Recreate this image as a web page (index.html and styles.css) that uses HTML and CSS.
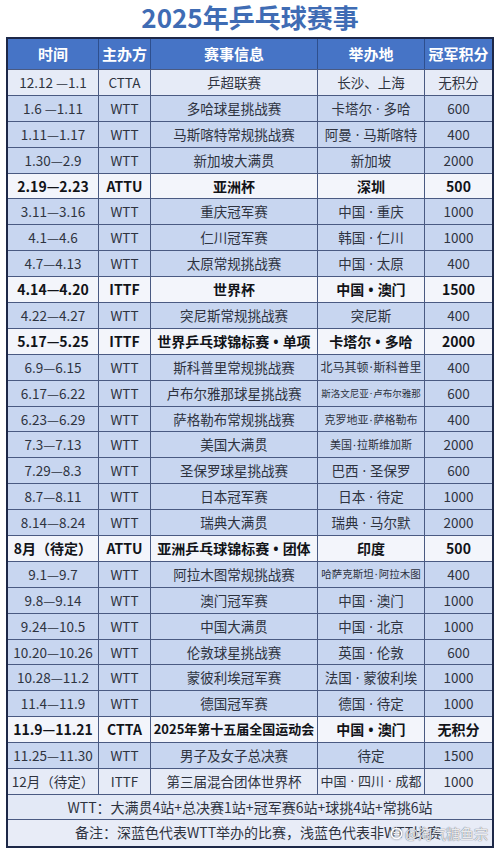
FILE: index.html
```html
<!DOCTYPE html>
<html lang="zh">
<head>
<meta charset="utf-8">
<title>2025年乒乓球赛事</title>
<link rel="stylesheet" href="styles.css">
</head>
<body>
<div class="page">
  <h1 class="title">2025年乒乓球赛事</h1>
  <div class="sched">
    <div class="row head"><div class="c">时间</div><div class="c">主办方</div><div class="c">赛事信息</div><div class="c">举办地</div><div class="c">冠军积分</div></div>
    <div class="row light"><div class="c">12.12 —1.1</div><div class="c">CTTA</div><div class="c">乒超联赛</div><div class="c">长沙、上海</div><div class="c">无积分</div></div>
    <div class="row wtt"><div class="c">1.6 —1.11</div><div class="c">WTT</div><div class="c">多哈球星挑战赛</div><div class="c">卡塔尔<span class="dot">·</span>多哈</div><div class="c">600</div></div>
    <div class="row wtt"><div class="c">1.11—1.17</div><div class="c">WTT</div><div class="c">马斯喀特常规挑战赛</div><div class="c">阿曼<span class="dot">·</span>马斯喀特</div><div class="c">400</div></div>
    <div class="row wtt"><div class="c">1.30—2.9</div><div class="c">WTT</div><div class="c">新加坡大满贯</div><div class="c">新加坡</div><div class="c">2000</div></div>
    <div class="row bold"><div class="c">2.19—2.23</div><div class="c">ATTU</div><div class="c">亚洲杯</div><div class="c">深圳</div><div class="c">500</div></div>
    <div class="row wtt"><div class="c">3.11—3.16</div><div class="c">WTT</div><div class="c">重庆冠军赛</div><div class="c">中国<span class="dot">·</span>重庆</div><div class="c">1000</div></div>
    <div class="row wtt"><div class="c">4.1—4.6</div><div class="c">WTT</div><div class="c">仁川冠军赛</div><div class="c">韩国<span class="dot">·</span>仁川</div><div class="c">1000</div></div>
    <div class="row wtt"><div class="c">4.7—4.13</div><div class="c">WTT</div><div class="c">太原常规挑战赛</div><div class="c">中国<span class="dot">·</span>太原</div><div class="c">400</div></div>
    <div class="row bold"><div class="c">4.14—4.20</div><div class="c">ITTF</div><div class="c">世界杯</div><div class="c">中国<span class="dot">•</span>澳门</div><div class="c">1500</div></div>
    <div class="row wtt"><div class="c">4.22—4.27</div><div class="c">WTT</div><div class="c">突尼斯常规挑战赛</div><div class="c">突尼斯</div><div class="c">400</div></div>
    <div class="row bold"><div class="c">5.17—5.25</div><div class="c">ITTF</div><div class="c">世界乒乓球锦标赛<span class="dot">•</span>单项</div><div class="c">卡塔尔<span class="dot">•</span>多哈</div><div class="c">2000</div></div>
    <div class="row wtt"><div class="c">6.9—6.15</div><div class="c">WTT</div><div class="c">斯科普里常规挑战赛</div><div class="c s12">北马其顿<span class="dot tight">·</span>斯科普里</div><div class="c">400</div></div>
    <div class="row wtt"><div class="c">6.17—6.22</div><div class="c">WTT</div><div class="c">卢布尔雅那球星挑战赛</div><div class="c s9">斯洛文尼亚<span class="dot tight">·</span>卢布尔雅那</div><div class="c">600</div></div>
    <div class="row wtt"><div class="c">6.23—6.29</div><div class="c">WTT</div><div class="c">萨格勒布常规挑战赛</div><div class="c s11">克罗地亚<span class="dot tight">·</span>萨格勒布</div><div class="c">400</div></div>
    <div class="row wtt"><div class="c">7.3—7.13</div><div class="c">WTT</div><div class="c">美国大满贯</div><div class="c s11">美国<span class="dot tight">·</span>拉斯维加斯</div><div class="c">2000</div></div>
    <div class="row wtt"><div class="c">7.29—8.3</div><div class="c">WTT</div><div class="c">圣保罗球星挑战赛</div><div class="c">巴西<span class="dot">·</span>圣保罗</div><div class="c">600</div></div>
    <div class="row wtt"><div class="c">8.7—8.11</div><div class="c">WTT</div><div class="c">日本冠军赛</div><div class="c">日本<span class="dot">·</span>待定</div><div class="c">1000</div></div>
    <div class="row wtt"><div class="c">8.14—8.24</div><div class="c">WTT</div><div class="c">瑞典大满贯</div><div class="c">瑞典<span class="dot">·</span>马尔默</div><div class="c">2000</div></div>
    <div class="row bold"><div class="c">8月（待定）</div><div class="c">ATTU</div><div class="c">亚洲乒乓球锦标赛<span class="dot">•</span>团体</div><div class="c">印度</div><div class="c">500</div></div>
    <div class="row wtt"><div class="c">9.1—9.7</div><div class="c">WTT</div><div class="c">阿拉木图常规挑战赛</div><div class="c s10">哈萨克斯坦<span class="dot tight">·</span>阿拉木图</div><div class="c">400</div></div>
    <div class="row wtt"><div class="c">9.8—9.14</div><div class="c">WTT</div><div class="c">澳门冠军赛</div><div class="c">中国<span class="dot">·</span>澳门</div><div class="c">1000</div></div>
    <div class="row wtt"><div class="c">9.24—10.5</div><div class="c">WTT</div><div class="c">中国大满贯</div><div class="c">中国<span class="dot">·</span>北京</div><div class="c">1000</div></div>
    <div class="row wtt"><div class="c">10.20—10.26</div><div class="c">WTT</div><div class="c">伦敦球星挑战赛</div><div class="c">英国<span class="dot">·</span>伦敦</div><div class="c">600</div></div>
    <div class="row wtt"><div class="c">10.28—11.2</div><div class="c">WTT</div><div class="c">蒙彼利埃冠军赛</div><div class="c">法国<span class="dot">·</span>蒙彼利埃</div><div class="c">1000</div></div>
    <div class="row wtt"><div class="c">11.4—11.9</div><div class="c">WTT</div><div class="c">德国冠军赛</div><div class="c">德国<span class="dot">·</span>待定</div><div class="c">1000</div></div>
    <div class="row bold"><div class="c">11.9—11.21</div><div class="c">CTTA</div><div class="c s13">2025年第十五届全国运动会</div><div class="c">中国<span class="dot">•</span>澳门</div><div class="c">无积分</div></div>
    <div class="row wtt"><div class="c">11.25—11.30</div><div class="c">WTT</div><div class="c">男子及女子总决赛</div><div class="c">待定</div><div class="c">1500</div></div>
    <div class="row light"><div class="c">12月（待定）</div><div class="c">ITTF</div><div class="c">第三届混合团体世界杯</div><div class="c s13">中国<span class="dot">·</span>四川<span class="dot">·</span>成都</div><div class="c">1000</div></div>
    <div class="note">WTT：大满贯4站+总决赛1站+冠军赛6站+球挑4站+常挑6站</div>
    <div class="note last"><span class="note-text">备注：深蓝色代表WTT举办的比赛，浅蓝色代表非WTT比赛</span>
      <span class="mark"><svg class="mark-ico" viewBox="0 0 14 14" width="13" height="13"><circle cx="7" cy="7" r="5.5" fill="none" stroke="#fff" stroke-width="1.6"/><path d="M4 6.2 Q7 4.6 10 6.2 M4 8.4 Q7 6.8 10 8.4" fill="none" stroke="#fff" stroke-width="1.2"/></svg>@淘气糖鱼宗</span>
    </div>
  </div>
</div>
</body>
</html>
```

FILE: styles.css
```css
html, body {
  margin: 0;
  padding: 0;
  background: #ffffff;
}
.page {
  width: 500px;
  height: 860px;
  font-family: "Noto Sans CJK SC", "Noto Sans", sans-serif;
  color: #2e333f;
}
.title {
  margin: 0;
  height: 37px;
  line-height: 34px;
  text-align: center;
  font-size: 26px;
  font-weight: 700;
  color: #3f6cb4;
  overflow: visible;
}
.sched {
  position: relative;
  margin: 0 6px;
  width: 488px;
  box-sizing: border-box;
  border: 2px solid #1d2848;
}
.row {
  display: grid;
  grid-template-columns: 91px 52px 167px 107px 67px;
  height: 25.9px;
  box-sizing: border-box;
  border-bottom: 1px solid #4a5a82;
}
.c {
  display: block;
  text-align: center;
  line-height: 24.9px;
  box-sizing: border-box;
  border-right: 1px solid #4a5a82;
  font-size: 13.5px;
  white-space: nowrap;
  overflow: hidden;
}
.c:last-child {
  border-right: none;
}
.dot {
  font-family: "Noto Sans", sans-serif;
  margin: 0 4px;
}
.dot.tight {
  margin: 0 1px;
}
.head {
  height: 31px;
  background: #4674c6;
}
.head .c {
  line-height: 30px;
  color: #ffffff;
  font-weight: 700;
  font-size: 15px;
  border-right-color: #2e4f8e;
}
.wtt {
  background: #c8d6f0;
}
.light {
  background: #e6ebf7;
}
.bold {
  background: #f3f5fb;
}
.bold .c {
  font-weight: 700;
  color: #111318;
  font-size: 14px;
}
.c.s13, .bold .c.s13 { font-size: 13px; }
.c.s12 { font-size: 12px; }
.c.s11 { font-size: 11px; }
.c.s10 { font-size: 10.5px; }
.c.s9 { font-size: 9.5px; }
.note {
  position: relative;
  height: 25.4px;
  box-sizing: border-box;
  border-bottom: 1px solid #4a5a82;
  background: #e3e9f6;
  line-height: 24.4px;
  text-align: center;
  font-size: 14px;
  white-space: nowrap;
}
.note.last {
  border-bottom: none;
  background: #e8ecf7;
  text-align: left;
  padding-left: 67px;
}
.mark {
  position: absolute;
  right: 4px;
  top: 5px;
  display: flex;
  align-items: center;
  gap: 2px;
  font-size: 14px;
  line-height: 16px;
  color: rgba(255, 255, 255, 0.85);
  text-shadow: 0 0 1px #7a7f8a, 0 0 1px #7a7f8a;
}
.mark-ico {
  filter: drop-shadow(0 0 1px #7a7f8a);
}
```
